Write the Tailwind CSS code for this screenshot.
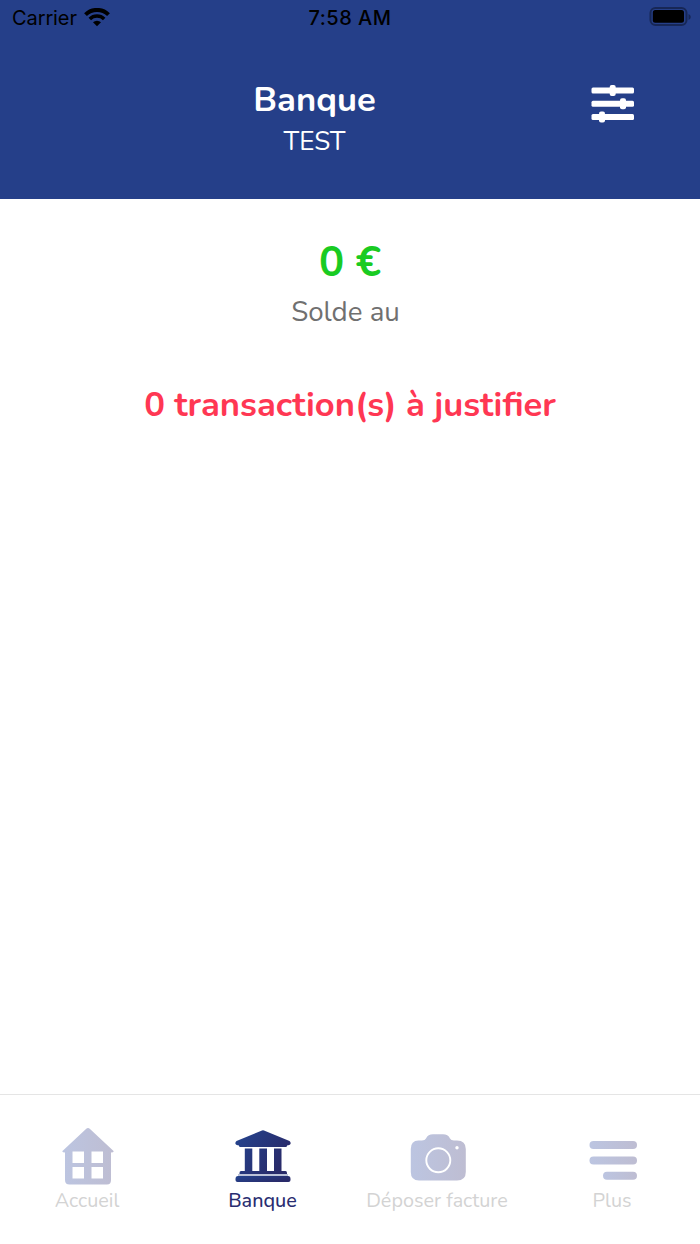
<!DOCTYPE html>
<html lang="fr">

<head>
    <meta charset="UTF-8">
    <meta name="viewport" content="width=device-width, initial-scale=1.0">
    <title>Banque</title>
    <script src="https://cdn.jsdelivr.net/npm/@tailwindcss/browser@4"></script>
</head>

<body class="bg-white">
    <div class="w-[700px] h-[1244px] flex flex-col overflow-hidden font-['Nunito','Lato',sans-serif] whitespace-nowrap">
        <!-- Header -->
        <header class="h-[199px] shrink-0 bg-[#253f89]">
            <!-- Status bar -->
            <div class="h-[36px] grid grid-cols-3 items-center pl-3 pr-[9px] text-black font-['Inter',sans-serif] text-[20px] leading-[36px]">
                <div class="flex items-center gap-[7px]">
                    <span class="tracking-[-0.1px]">Carrier</span>
                    <svg class="w-[26px] h-[19px] -mt-[2px]" viewBox="0 0 26 19" fill="none" stroke="#000">
                        <path d="M1.5 6.6a16.4 16.4 0 0 1 23 0" stroke-width="4" />
                        <path d="M5.8 11a10.2 10.2 0 0 1 14.4 0" stroke-width="3.5" />
                        <path d="M9 14.3a5.7 5.7 0 0 1 8 0L13 18.3z" fill="#000" stroke="none" />
                    </svg>
                </div>
                <div class="pr-[3px] text-center font-medium tracking-[0.5px]">7:58 AM</div>
                <svg class="w-[42px] h-[20px] -mt-[2px] justify-self-end" viewBox="0 0 42 20">
                    <rect x="1.5" y="1" width="36" height="17" rx="5" fill="none" stroke="#172756" stroke-width="2" />
                    <rect x="3.8" y="3" width="31.2" height="12.8" rx="2.5" />
                    <path d="M39.5 7q2.3 1 2.3 3t-2.3 3z" fill="#172756" />
                </svg>
            </div>
            <!-- Title and filter button -->
            <div class="w-[630px] flex items-start pt-[42px] text-white">
                <div class="flex-1 pl-[38px] text-center">
                    <h1 class="text-[34.6px] leading-[43px] font-bold">Banque</h1>
                    <p class="text-[26px] leading-[42px]">TEST</p>
                </div>
                <svg class="w-[43px] h-[38px] mt-[7px] -mr-1 shrink-0" viewBox="0 0 43 38" fill="#fff">
                    <rect x=".5" y="2.5" width="42.5" height="6" rx="1.5" />
                    <rect x=".5" y="15.7" width="42.5" height="6" rx="1.5" />
                    <rect x=".5" y="29" width="42.5" height="6" rx="1.5" />
                    <rect x="18.7" width="6" height="11" rx="2" />
                    <rect x="29" y="13.2" width="6" height="11" rx="2" />
                    <rect x="8" y="26.4" width="6" height="11" rx="2" />
                </svg>
            </div>
        </header>

        <!-- Balance -->
        <main class="flex-1 text-center">
            <div class="pt-[39px] text-[42px] leading-[50px] font-bold text-[#19cb22]">0 €</div>
            <div class="pt-[4px] pr-[9px] text-[27.7px] leading-[40px] text-[#707070]">Solde au</div>
            <div class="pt-[52px] text-[34.6px] leading-[42px] font-bold text-[#ff3753]">0 transaction(s) à justifier</div>
        </main>

        <!-- Tab bar -->
        <nav class="h-[150px] shrink-0 border-t border-[#e5e5e5] grid grid-cols-4 pt-[32px] text-center text-[19.8px] leading-[28px] text-[#d3d3d3]">
            <a class="flex flex-col items-center">
                <svg class="w-[52px] h-[60px]" viewBox="0 0 52 60">
                    <defs>
                        <linearGradient id="soft">
                            <stop stop-color="#bcc5e1" />
                            <stop offset="1" stop-color="#bebdd2" />
                        </linearGradient>
                        <linearGradient id="dark" x2="1" y2=".5">
                            <stop stop-color="#24448f" />
                            <stop offset="1" stop-color="#292a69" />
                        </linearGradient>
                    </defs>
                    <path fill="url(#soft)" fill-rule="evenodd" d="M26 1Q27 1 28 2L51 23.5Q53 25.5 49 25.5V53Q49 57.5 45 57.5H7.5Q3 57.5 3 53V25.5Q-1 25.5 1 23.5L24 2Q25 1 26 1ZM10.5 24.5V36H22V24.5ZM29.5 24.5V36H41V24.5ZM10.5 40V51.5H22V40ZM29.5 40V51.5H41V40Z" />
                </svg>
                <span class="pr-px">Accueil</span>
            </a>
            <a class="flex flex-col items-center text-[#292d70]">
                <svg class="w-[56px] h-[60px]" viewBox="0 0 56 60">
                    <path fill="url(#dark)" d="M27 3.5Q28 3 29 3.5L54.500 14Q56 15 55.500 17Q55 18.300 52 18.500V19Q52 20 50.500 20H5.500Q4 20 4 19V18.500Q1 18.300 .5 17Q0 15 1.500 14ZM9.800 21.500H17.300V44H24.300V21.500H32V44H39V21.500H46.500V44H50.500Q52 44 52 46V47H4.500V46Q4.500 44 6 44H9.800Z" />
                    <path fill="#bcc2d8" d="M3 47H53V49H3z" />
                    <path fill="url(#dark)" d="M3 49H53Q55.500 49 55.500 52V53Q55.500 55 53.500 55H2.500Q.5 55 .5 53V52Q.5 49 3 49Z" />
                </svg>
                <span class="font-medium">Banque</span>
            </a>
            <a class="flex flex-col items-center">
                <svg class="w-[56px] h-[60px]" viewBox="0 0 56 60">
                    <path fill="url(#soft)" d="M8.5 13.5H12Q15 13.5 16 11.5Q18 7.3 23 7.3H33Q38 7.3 40 11.5Q41 13.5 44 13.5H47Q55.8 13.5 55.8 22V45Q55.8 53.5 47 53.5H9Q.8 53.5 .8 45V22Q.8 13.5 8.500 13.5Z" />
                    <circle cx="28.3" cy="33.3" r="12" fill="none" stroke="#fff" stroke-width="1.9" />
                    <circle cx="47" cy="20.7" r="1.7" fill="#fff" />
                </svg>
                <span class="pr-px">Déposer facture</span>
            </a>
            <a class="flex flex-col items-center">
                <svg class="w-[48px] h-[60px]" viewBox="0 0 48 60" fill="url(#soft)">
                    <rect x=".5" y="14" width="47.5" height="8" rx="4" />
                    <rect x=".5" y="29.5" width="47.5" height="8" rx="4" />
                    <rect x="14" y="44.8" width="34" height="8" rx="4" />
                </svg>
                <span class="pr-px">Plus</span>
            </a>
        </nav>
    </div>
</body>

</html>
